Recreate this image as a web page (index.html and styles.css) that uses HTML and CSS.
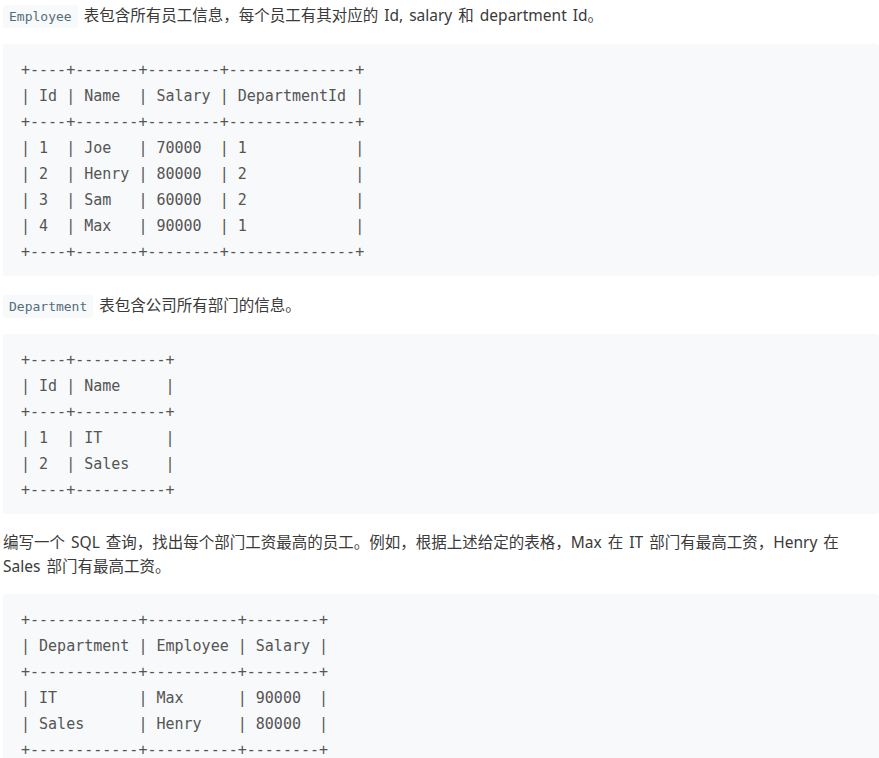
FILE: index.html
```html
<!DOCTYPE html>
<html lang="zh-CN">
<head>
<meta charset="UTF-8">
<meta name="viewport" content="width=device-width, initial-scale=1.0">
<title>部门工资最高的员工</title>
<link rel="stylesheet" href="styles.css">
</head>
<body>

<div class="question">
  <p class="lead"><code>Employee</code> 表包含所有员工信息，每个员工有其对应的 Id, salary 和 department Id。</p>
<pre>+----+-------+--------+--------------+
| Id | Name  | Salary | DepartmentId |
+----+-------+--------+--------------+
| 1  | Joe   | 70000  | 1            |
| 2  | Henry | 80000  | 2            |
| 3  | Sam   | 60000  | 2            |
| 4  | Max   | 90000  | 1            |
+----+-------+--------+--------------+</pre>

  <p class="lead"><code>Department</code> 表包含公司所有部门的信息。</p>
<pre>+----+----------+
| Id | Name     |
+----+----------+
| 1  | IT       |
| 2  | Sales    |
+----+----------+</pre>

  <p>编写一个 SQL 查询，找出每个部门工资最高的员工。例如，根据上述给定的表格，Max 在 IT 部门有最高工资，Henry 在<br>Sales 部门有最高工资。</p>
<pre>+------------+----------+--------+
| Department | Employee | Salary |
+------------+----------+--------+
| IT         | Max      | 90000  |
| Sales      | Henry    | 80000  |
+------------+----------+--------+</pre>
</div>

</body>
</html>
```
FILE: styles.css
```css
body {
  margin: 0;
  padding: 2px 0 0 3px;
  background-color: #fff;
  color: #3a3a3a;
  font-family: 'Noto Sans', 'Noto Sans CJK SC', sans-serif;
  font-size: 15.5px;
}

.question p {
  margin: 0 0 16px;
  line-height: 24px;
  word-spacing: 2px;
}

.question p.lead {
  line-height: 26px;
}

.question code {
  font-family: 'DejaVu Sans Mono', monospace;
  font-size: 13px;
  line-height: 1;
  word-spacing: 0;
  color: #546e7a;
  background-color: #f7f9fa;
  padding: 4px 6px;
  border-radius: 3px;
}

.question pre {
  margin: 0 0 16px;
  padding: 13px 18px 11px;
  background-color: #f7f9fa;
  border-radius: 3px;
  font-family: 'DejaVu Sans Mono', monospace;
  font-size: 15px;
  line-height: 26px;
  color: #555;
}
```
